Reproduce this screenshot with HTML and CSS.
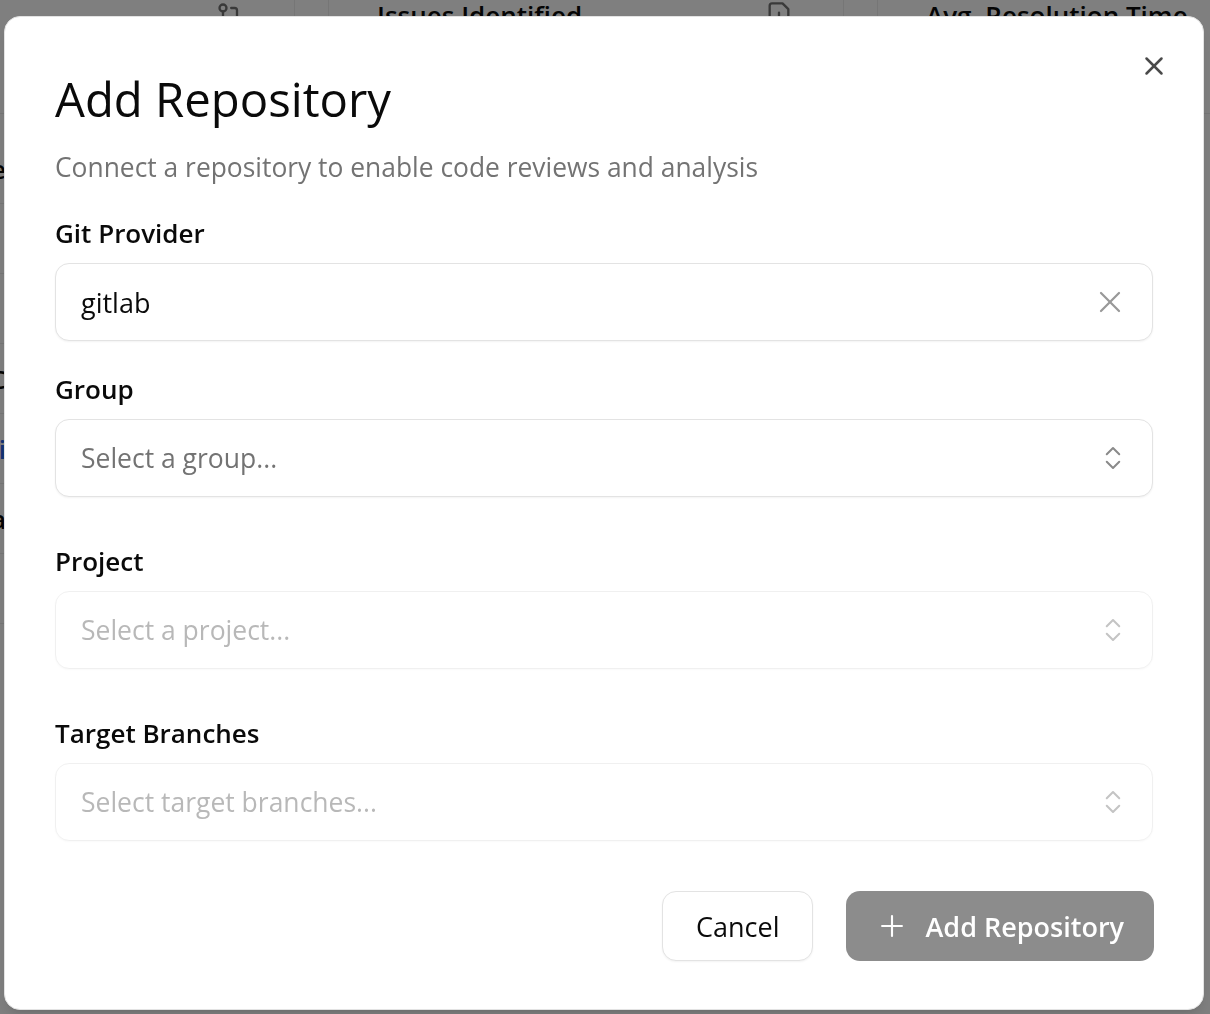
FILE: index.html
```html
<!DOCTYPE html>
<html lang="en">
<head>
<meta charset="utf-8">
<title>Add Repository</title>
<link rel="stylesheet" href="styles.css">
</head>
<body>
<div class="page">
  <div class="stats">
    <div class="card">
      <div class="card-head">
        <span class="card-title">Total Reviews</span>
        <svg class="card-icon" viewBox="0 0 24 24" fill="none" stroke="currentColor" stroke-width="2" stroke-linecap="round" stroke-linejoin="round"><circle cx="6" cy="6" r="3"/><path d="M6 9v12"/><path d="M13 6h3a2 2 0 0 1 2 2v7"/><circle cx="18" cy="18" r="3"/></svg>
      </div>
    </div>
    <div class="card">
      <div class="card-head">
        <span class="card-title">Issues Identified</span>
        <svg class="card-icon" viewBox="0 0 24 24" fill="none" stroke="currentColor" stroke-width="2" stroke-linecap="round" stroke-linejoin="round"><path d="M15 2H6a2 2 0 0 0-2 2v16a2 2 0 0 0 2 2h12a2 2 0 0 0 2-2V7Z"/><path d="M12 10v4"/><path d="M12 18h.01"/></svg>
      </div>
    </div>
    <div class="card">
      <div class="card-head">
        <span class="card-title">Avg. Resolution Time</span>
        <svg class="card-icon" viewBox="0 0 24 24" fill="none" stroke="currentColor" stroke-width="2" stroke-linecap="round" stroke-linejoin="round"><circle cx="12" cy="12" r="10"/><path d="M12 6v6l4 2"/></svg>
      </div>
    </div>
  </div>
  <div class="table">
    <div class="row">e</div>
    <div class="row"></div>
    <div class="row"></div>
    <div class="row">C</div>
    <div class="row link">i</div>
    <div class="row">a</div>
    <div class="row"></div>
  </div>
</div>

<div class="overlay"></div>

<div class="dialog" role="dialog" aria-labelledby="dlg-title">
  <button class="close" aria-label="Close">
    <svg viewBox="0 0 24 24" fill="none" stroke="currentColor" stroke-width="2" stroke-linecap="round" stroke-linejoin="round"><path d="M18 6 6 18"/><path d="m6 6 12 12"/></svg>
  </button>

  <header class="dialog-header">
    <h2 class="dialog-title" id="dlg-title">Add Repository</h2>
    <p class="dialog-desc">Connect a repository to enable code reviews and analysis</p>
  </header>

  <div class="field">
    <label class="field-label">Git Provider</label>
    <div class="select">
      <span class="select-value">gitlab</span>
      <svg class="icon-clear" viewBox="0 0 24 24" fill="none" stroke="currentColor" stroke-width="1.5" stroke-linecap="round" stroke-linejoin="round"><path d="M18 6 6 18"/><path d="m6 6 12 12"/></svg>
    </div>
  </div>

  <div class="field">
    <label class="field-label">Group</label>
    <div class="select">
      <span class="select-placeholder">Select a group...</span>
      <svg class="icon-chevrons" viewBox="0 0 24 24" fill="none" stroke="currentColor" stroke-width="1.6" stroke-linecap="round" stroke-linejoin="round"><path d="m7 15 5 5 5-5"/><path d="m7 9 5-5 5 5"/></svg>
    </div>
  </div>

  <div class="field field-spaced">
    <label class="field-label">Project</label>
    <div class="select is-disabled">
      <span class="select-placeholder">Select a project...</span>
      <svg class="icon-chevrons" viewBox="0 0 24 24" fill="none" stroke="currentColor" stroke-width="1.6" stroke-linecap="round" stroke-linejoin="round"><path d="m7 15 5 5 5-5"/><path d="m7 9 5-5 5 5"/></svg>
    </div>
  </div>

  <div class="field field-spaced">
    <label class="field-label">Target Branches</label>
    <div class="select is-disabled">
      <span class="select-placeholder">Select target branches...</span>
      <svg class="icon-chevrons" viewBox="0 0 24 24" fill="none" stroke="currentColor" stroke-width="1.6" stroke-linecap="round" stroke-linejoin="round"><path d="m7 15 5 5 5-5"/><path d="m7 9 5-5 5 5"/></svg>
    </div>
  </div>

  <div class="actions">
    <button class="btn btn-outline">Cancel</button>
    <button class="btn btn-primary" disabled>
      <svg class="icon-plus" viewBox="0 0 24 24" fill="none" stroke="currentColor" stroke-width="1.5" stroke-linecap="round" stroke-linejoin="round"><path d="M5 12h14"/><path d="M12 5v14"/></svg>
      <span>Add Repository</span>
    </button>
  </div>
</div>
</body>
</html>
```

FILE: styles.css
```css
* {
  box-sizing: border-box;
}

html,
body {
  margin: 0;
  height: 100%;
}

body {
  font-family: "Open Sans", "Noto Sans", "Liberation Sans", sans-serif;
  background: #ffffff;
  color: #0a0a0a;
  overflow: hidden;
}

/* ---------- background page ---------- */
.page {
  width: 1210px;
  height: 1014px;
  overflow: hidden;
}

.stats {
  display: flex;
  gap: 33px;
  margin: -34px 0 0 -221px;
}

.card {
  flex: 0 0 516px;
  border: 1px solid #ececec;
  border-radius: 14px;
  padding: 30px 48px 80px;
}

.card-head {
  display: flex;
  justify-content: space-between;
  align-items: center;
}

.card-title {
  font-size: 26px;
  font-weight: 600;
  line-height: 36px;
}

.card-icon {
  width: 28px;
  height: 28px;
  color: #737373;
  margin-right: 2px;
}

.table {
  margin: 20px 0 0 -12px;
  width: 18px;
}

.row {
  height: 70px;
  padding-top: 20px;
  border-bottom: 1px solid #ececec;
  font-size: 26px;
  font-weight: 600;
  line-height: 30px;
  text-align: right;
}

.row.link {
  color: #2563eb;
}

.overlay {
  position: fixed;
  inset: 0;
  background: rgba(0, 0, 0, 0.5);
}

/* ---------- dialog ---------- */
.dialog {
  position: fixed;
  left: 4px;
  top: 16px;
  width: 1200px;
  background: #ffffff;
  border: 1px solid #e3e3e3;
  border-radius: 16px;
  padding: 53px 50px 48px;
  box-shadow: 0 10px 15px -3px rgba(0, 0, 0, 0.1), 0 4px 6px -4px rgba(0, 0, 0, 0.1);
}

.close {
  position: absolute;
  top: 34px;
  right: 34px;
  width: 30px;
  height: 30px;
  padding: 0;
  border: 0;
  background: transparent;
  color: #4a4a4a;
  cursor: pointer;
}

.close svg {
  display: block;
  width: 30px;
  height: 30px;
}

.dialog-header {
  margin-bottom: 28px;
}

.dialog-title {
  margin: 0;
  font-size: 47.3px;
  line-height: 58px;
  font-weight: 500;
  color: #0a0a0a;
}

.dialog-desc {
  margin: 21px 0 0;
  font-size: 26.4px;
  line-height: 36px;
  color: #737373;
}

.field {
  display: flex;
  flex-direction: column;
  gap: 10px;
}

.field + .field {
  margin-top: 28px;
}

.field.field-spaced {
  margin-top: 44px;
}

.field-label {
  font-size: 26px;
  line-height: 40px;
  font-weight: 600;
  color: #0a0a0a;
}

.select {
  height: 78px;
  display: flex;
  align-items: center;
  justify-content: space-between;
  padding: 0 24px 0 25px;
  border: 1px solid #e3e3e3;
  border-radius: 14px;
  background: #ffffff;
  box-shadow: 0 1px 2px rgba(0, 0, 0, 0.05);
  font-size: 27px;
}

.select-value {
  color: #0a0a0a;
}

.select-placeholder {
  color: #737373;
  font-size: 26.5px;
}

.select.is-disabled {
  opacity: 0.5;
}

.icon-clear {
  width: 36px;
  height: 36px;
  color: #999999;
}

.icon-chevrons {
  width: 30px;
  height: 30px;
  margin-right: 0;
  color: #8a8a8a;
}

/* ---------- actions ---------- */
.actions {
  display: flex;
  justify-content: flex-end;
  gap: 33px;
  margin-top: 50px;
  margin-right: -1px;
}

.btn {
  height: 70px;
  display: inline-flex;
  align-items: center;
  border-radius: 14px;
  font-family: inherit;
  font-size: 27px;
  cursor: pointer;
}

.btn-outline {
  padding: 0 33px;
  background: #ffffff;
  border: 1px solid #e3e3e3;
  color: #0a0a0a;
  font-weight: 500;
  box-shadow: 0 1px 2px rgba(0, 0, 0, 0.05);
}

.btn-primary {
  gap: 16px;
  padding: 0 30px 0 29px;
  background: #8c8c8c;
  border: 0;
  color: #ffffff;
  font-weight: 600;
}

.icon-plus {
  width: 34px;
  height: 34px;
}
```
